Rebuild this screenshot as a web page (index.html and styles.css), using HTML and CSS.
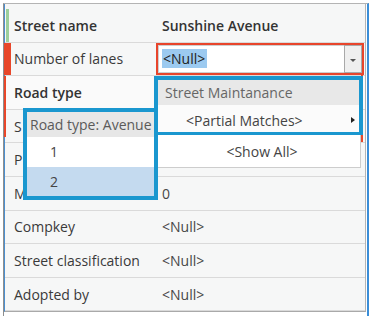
FILE: index.html
```html
<!DOCTYPE html>
<html lang="en">
<head>
    <meta charset="UTF-8">
    <meta name="viewport" content="width=device-width, initial-scale=1.0">
    <title>Attributes</title>
    <link rel="stylesheet" href="styles.css">
</head>
<body>
    <div class="frame">
        <div class="grid">
            <div class="row row-edited">
                <span class="label strong">Street name</span>
                <span class="value strong">Sunshine Avenue</span>
            </div>
            <div class="row row-active">
                <span class="label">Number of lanes</span>
                <div class="combo">
                    <div class="combo-field"><span class="selected">&lt;Null&gt;</span></div>
                    <div class="combo-btn"><span class="caret-down"></span></div>
                </div>
            </div>
            <div class="row row-light">
                <span class="label strong">Road type</span>
            </div>
            <div class="row">
                <span class="label">S</span>
            </div>
            <div class="row">
                <span class="label">P</span>
            </div>
            <div class="row">
                <span class="label">M</span>
                <span class="value">0</span>
            </div>
            <div class="row">
                <span class="label">Compkey</span>
                <span class="value">&lt;Null&gt;</span>
            </div>
            <div class="row">
                <span class="label">Street classification</span>
                <span class="value">&lt;Null&gt;</span>
            </div>
            <div class="row">
                <span class="label">Adopted by</span>
                <span class="value">&lt;Null&gt;</span>
            </div>
        </div>

        <div class="focus-line focus-left"></div>
        <div class="focus-line focus-right"></div>

        <div class="dropdown">
            <div class="dropdown-item dropdown-group">Street Maintanance</div>
            <div class="dropdown-item dropdown-partial">&lt;Partial Matches&gt;<span class="caret-right"></span></div>
            <div class="dropdown-item dropdown-all">&lt;Show All&gt;</div>
        </div>
        <div class="callout callout-list"></div>

        <div class="submenu">
            <div class="submenu-header">Road type: Avenue</div>
            <div class="submenu-item">1</div>
            <div class="submenu-item selected-item">2</div>
        </div>
    </div>
</body>
</html>
```

FILE: styles.css
```css
body {
    margin: 0;
    background-color: #fff;
    font-family: "Open Sans", Arial, sans-serif;
    font-size: 14px;
    color: #3a3a3a;
}
.frame {
    position: relative;
    width: 366px;
    height: 313px;
    margin: 3px 0 0 3px;
    box-sizing: border-box;
    border-left: 1px solid #8e8e8e;
    border-top: 1px solid #b4b4b4;
    border-right: 2px solid #3b8ed8;
    padding-bottom: 4px;
}
.grid {
    margin-right: 1px;
    padding-top: 5px;
    background-color: #f6f7f7;
    border-left: 1px solid #4b8fd0;
    border-right: 1px solid #b5b5b5;
    border-bottom: 1px solid #a9a9a9;
}
.row {
    position: relative;
    display: flex;
    align-items: center;
    height: 33.6px;
    box-sizing: border-box;
    padding-left: 9px;
    border-bottom: 1px solid #dadada;
}
.row-light {
    background-color: #fafafa;
}
.row-edited::before {
    content: "";
    position: absolute;
    left: 1px;
    top: 0;
    bottom: 0;
    width: 3px;
    background-color: #9ccf9c;
}
.row-active::before {
    content: "";
    position: absolute;
    left: -1px;
    top: 0;
    bottom: 0;
    width: 7px;
    background-color: #e8472a;
}
.label {
    width: 148px;
    flex-shrink: 0;
    white-space: nowrap;
}
.value {
    color: #474747;
    white-space: nowrap;
}
.strong {
    font-weight: 600;
    color: #333;
}
.combo {
    display: flex;
    width: 208px;
    height: 32px;
    margin-left: -6px;
    box-sizing: border-box;
    border: 2px solid #e8452c;
    background-color: #fff;
}
.combo-field {
    flex: 1;
    display: flex;
    align-items: center;
    padding-left: 3px;
    border: 1px solid #cfcfcf;
    border-right: none;
}
.selected {
    background-color: #9ccaf0;
    color: #222;
    padding: 0 2px 0 1px;
    line-height: 19px;
}
.combo-btn {
    width: 18px;
    display: flex;
    align-items: center;
    justify-content: center;
    box-sizing: border-box;
    border: 1px solid #a9a9a9;
    background-color: #efefef;
}
.caret-down {
    width: 0;
    height: 0;
    margin-top: 3px;
    border-left: 3px solid transparent;
    border-right: 3px solid transparent;
    border-top: 3px solid #555;
}
.focus-line {
    position: absolute;
    width: 2px;
    background-color: #e8472a;
}
.focus-left {
    left: 0;
    top: 72px;
    height: 61px;
}
.focus-right {
    left: 357px;
    top: 70px;
    height: 68px;
}
.dropdown {
    position: absolute;
    left: 153px;
    top: 72px;
    width: 204px;
    height: 92px;
    box-sizing: border-box;
    border: 1px solid #cdcdcd;
    background-color: #fbfbfb;
    color: #555;
}
.dropdown-item {
    display: flex;
    align-items: center;
}
.dropdown-group {
    height: 25px;
    margin-top: 3px;
    padding-left: 7px;
    background-color: #e8e8e8;
    color: #666;
}
.dropdown-partial {
    position: relative;
    height: 30px;
    padding-left: 28px;
    color: #444;
}
.caret-right {
    position: absolute;
    right: 5px;
    top: 12px;
    width: 0;
    height: 0;
    border-top: 3px solid transparent;
    border-bottom: 3px solid transparent;
    border-left: 4px solid #222;
}
.dropdown-all {
    height: 32px;
    justify-content: center;
    padding-left: 6px;
    background-color: #fff;
    color: #444;
}
.callout {
    position: absolute;
    box-sizing: border-box;
    border: 4px solid #1a97cf;
    border-bottom-width: 3px;
}
.callout-list {
    left: 150px;
    top: 72px;
    width: 209px;
    height: 59px;
}
.submenu {
    position: absolute;
    left: 19px;
    top: 104px;
    width: 135px;
    height: 92px;
    box-sizing: border-box;
    border: 4px solid #1a97cf;
    background-color: #fff;
    overflow: hidden;
}
.submenu-header {
    height: 25px;
    padding-left: 3px;
    line-height: 25px;
    background-color: #e7e7e7;
    color: #5a5a5a;
    white-space: nowrap;
}
.submenu-item {
    height: 30px;
    padding-left: 23px;
    line-height: 30px;
    color: #444;
}
.selected-item {
    background-color: #c4daef;
}
```
